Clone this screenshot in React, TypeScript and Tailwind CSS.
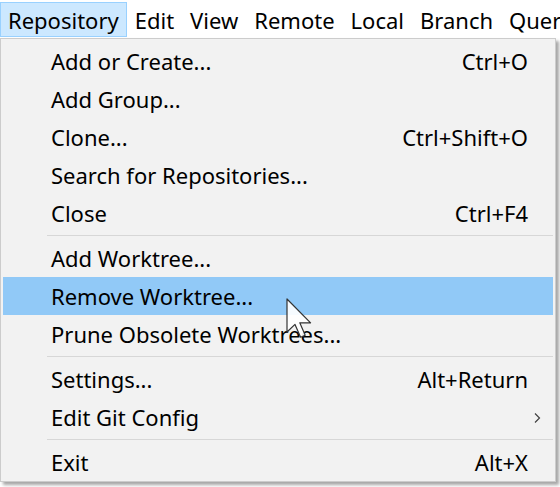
import React from "react";

type Item =
  | { kind: "item"; label: string; shortcut?: string; submenu?: boolean; active?: boolean }
  | { kind: "sep" };

const menuBar = ["Repository", "Edit", "View", "Remote", "Local", "Branch", "Query"];

const items: Item[] = [
  { kind: "item", label: "Add or Create...", shortcut: "Ctrl+O" },
  { kind: "item", label: "Add Group..." },
  { kind: "item", label: "Clone...", shortcut: "Ctrl+Shift+O" },
  { kind: "item", label: "Search for Repositories..." },
  { kind: "item", label: "Close", shortcut: "Ctrl+F4" },
  { kind: "sep" },
  { kind: "item", label: "Add Worktree..." },
  { kind: "item", label: "Remove Worktree...", active: true },
  { kind: "item", label: "Prune Obsolete Worktrees..." },
  { kind: "sep" },
  { kind: "item", label: "Settings...", shortcut: "Alt+Return" },
  { kind: "item", label: "Edit Git Config", submenu: true },
  { kind: "sep" },
  { kind: "item", label: "Exit", shortcut: "Alt+X" },
];

export default function App() {
  return (
    <div
      className="relative w-[560px] h-[487px] overflow-hidden bg-white text-black text-[22px]"
      style={{ fontFamily: '"Noto Sans", "Open Sans", sans-serif' }}
    >
      {/* menu bar */}
      <div className="flex h-[38px] pt-[2px] whitespace-nowrap">
        {menuBar.map((m, i) => (
          <div
            key={m}
            className={
              i === 0
                ? "flex h-[35px] items-center pt-[1px] px-[7px] border border-[#99d1ff] bg-[#cce8ff]"
                : "flex h-[35px] items-center pt-[1px] px-[7px] border border-transparent"
            }
          >
            {m}
          </div>
        ))}
      </div>

      {/* dropdown */}
      <div className="w-[556px] border border-[#cccccc] bg-[#f2f2f2] px-[2px] pt-[3px] shadow-[3px_3px_3px_rgba(0,0,0,0.35)]">
        {items.map((it, i) =>
          it.kind === "sep" ? (
            <div key={i} className="h-[7px] pt-[3px] pl-[44px]">
              <div className="h-px bg-[#d7d7d7]" />
            </div>
          ) : (
            <div
              key={i}
              className={
                "relative flex h-[38px] items-center pl-[48px] pr-[25px] whitespace-nowrap " +
                (it.active ? "bg-[#91c9f7]" : "")
              }
            >
              <span className="flex-1">{it.label}</span>
              {it.shortcut && <span>{it.shortcut}</span>}
              {it.submenu && (
                <svg
                  className="absolute right-[11px] top-[14px]"
                  width="9"
                  height="12"
                  viewBox="0 0 9 12"
                  fill="none"
                >
                  <path d="M2 1.5 L6.5 6 L2 10.5" stroke="#404040" strokeWidth="1.2" />
                </svg>
              )}
            </div>
          )
        )}
      </div>

      {/* mouse pointer */}
      <svg
        className="absolute left-[286px] top-[298px]"
        width="28"
        height="42"
        viewBox="0 0 14 21"
        fill="none"
      >
        <path
          d="M0.5 0.5 L0.5 17 L4.5 13.2 L7.3 19.6 L9.6 18.6 L6.9 12.4 L12.3 12.4 Z"
          fill="#ffffff"
          fillOpacity="0.92"
          stroke="#333333"
          strokeWidth="0.6"
          strokeLinejoin="round"
        />
      </svg>
    </div>
  );
}
